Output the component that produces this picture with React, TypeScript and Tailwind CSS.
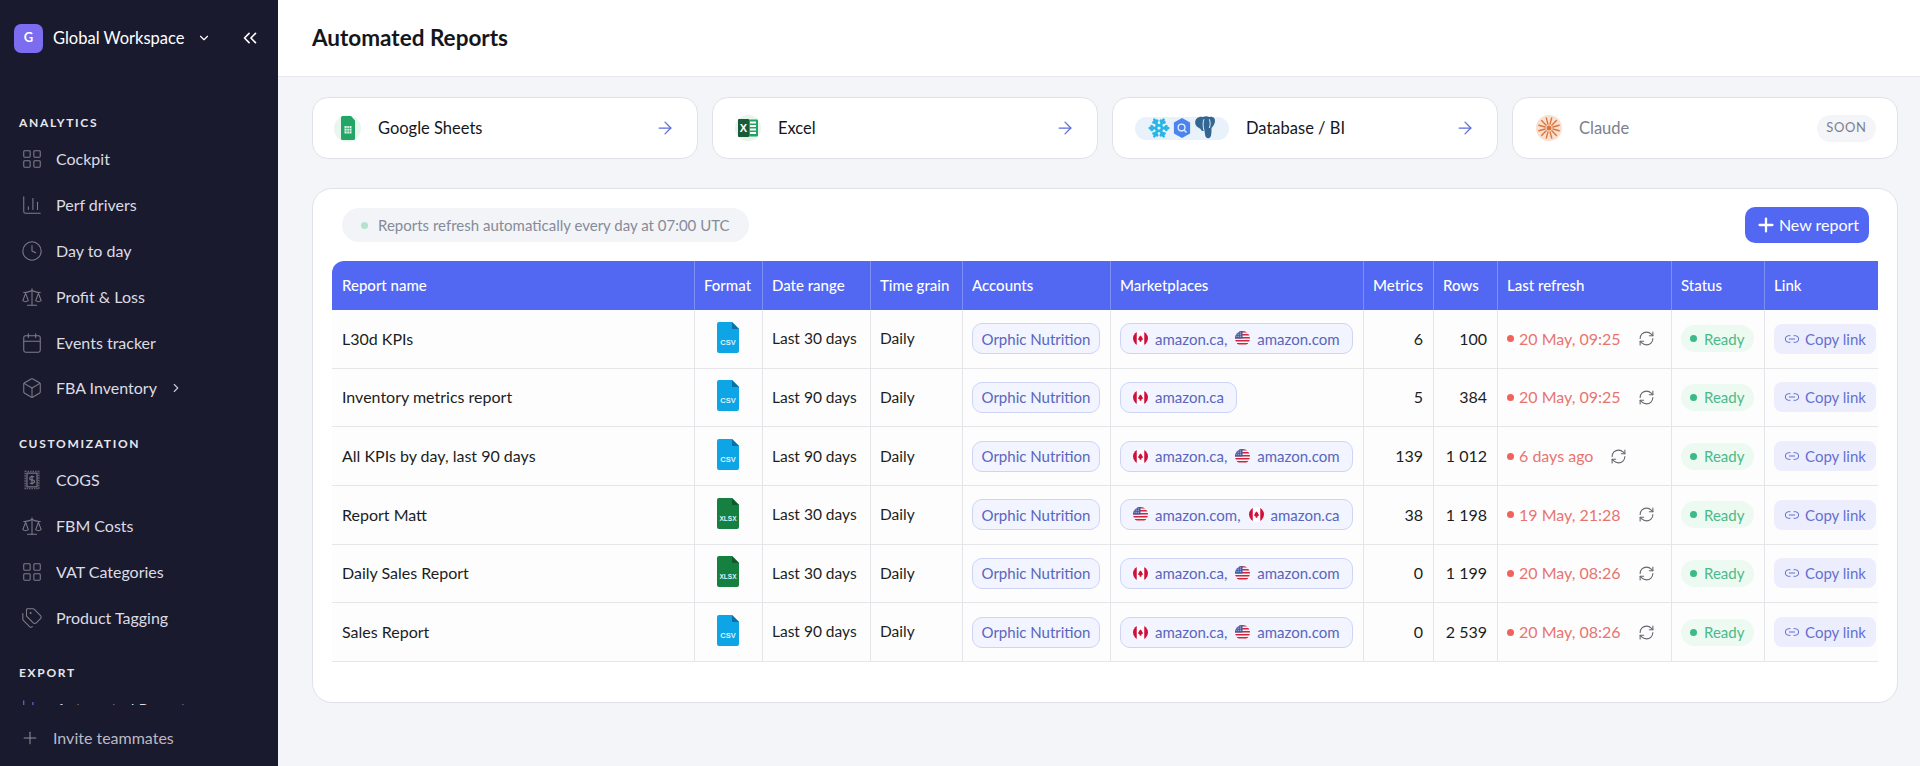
import {
  ArrowRight,
  Box,
  Calendar,
  ChartColumn,
  ChevronDown,
  ChevronRight,
  ChevronsLeft,
  Clock,
  LayoutGrid,
  Link2,
  Plus,
  RefreshCw,
  Scale,
  Snowflake,
  Tags,
} from "lucide-react";

const font = { fontFamily: "Lato, 'Liberation Sans', sans-serif" };

const StampIcon = ({ className }: { className?: string }) => (
  <svg viewBox="0 0 24 24" fill="none" stroke="currentColor" strokeWidth="1.25" className={className}>
    <rect x="4.5" y="2.5" width="15" height="19" strokeDasharray="1.6 1.1" />
    <rect x="6.5" y="4.5" width="11" height="15" />
    <path d="M14.5 8.5h-3.2a1.7 1.7 0 0 0 0 3.5h1.6a1.7 1.7 0 0 1 0 3.5H9.5M12 7v10" />
  </svg>
);

const sections = [
  {
    title: "ANALYTICS",
    gap: "mb-[27px]",
    items: [
      { label: "Cockpit", icon: LayoutGrid },
      { label: "Perf drivers", icon: ChartColumn },
      { label: "Day to day", icon: Clock },
      { label: "Profit & Loss", icon: Scale },
      { label: "Events tracker", icon: Calendar },
      { label: "FBA Inventory", icon: Box, more: true },
    ],
  },
  {
    title: "CUSTOMIZATION",
    gap: "mb-[24px]",
    items: [
      { label: "COGS", icon: StampIcon },
      { label: "FBM Costs", icon: Scale },
      { label: "VAT Categories", icon: LayoutGrid },
      { label: "Product Tagging", icon: Tags },
    ],
  },
];

const reports = [
  { name: "L30d KPIs", format: "CSV", range: "Last 30 days", markets: ["ca", "com"], metrics: "6", rows: "100", refresh: "20 May, 09:25" },
  { name: "Inventory metrics report", format: "CSV", range: "Last 90 days", markets: ["ca"], metrics: "5", rows: "384", refresh: "20 May, 09:25" },
  { name: "All KPIs by day, last 90 days", format: "CSV", range: "Last 90 days", markets: ["ca", "com"], metrics: "139", rows: "1 012", refresh: "6 days ago" },
  { name: "Report Matt", format: "XLSX", range: "Last 30 days", markets: ["com", "ca"], metrics: "38", rows: "1 198", refresh: "19 May, 21:28" },
  { name: "Daily Sales Report", format: "XLSX", range: "Last 30 days", markets: ["ca", "com"], metrics: "0", rows: "1 199", refresh: "20 May, 08:26" },
  { name: "Sales Report", format: "CSV", range: "Last 90 days", markets: ["ca", "com"], metrics: "0", rows: "2 539", refresh: "20 May, 08:26" },
];

const columns = [
  { label: "Report name", width: "w-[363px]" },
  { label: "Format", width: "w-[68px]" },
  { label: "Date range", width: "w-[108px]" },
  { label: "Time grain", width: "w-[92px]" },
  { label: "Accounts", width: "w-[148px]" },
  { label: "Marketplaces", width: "w-[253px]" },
  { label: "Metrics", width: "w-[70px]" },
  { label: "Rows", width: "w-[64px]" },
  { label: "Last refresh", width: "w-[174px]" },
  { label: "Status", width: "w-[93px]" },
  { label: "Link", width: "w-[113px]" },
];

const FlagCa = () => (
  <svg viewBox="0 0 16 16" className="w-[15px] h-[15px] shrink-0">
    <clipPath id="ca-clip">
      <circle cx="8" cy="8" r="8" />
    </clipPath>
    <g clipPath="url(#ca-clip)">
      <rect width="16" height="16" fill="#fff" />
      <rect width="4" height="16" fill="#d0103a" />
      <rect x="12" width="4" height="16" fill="#d0103a" />
      <path d="M8 4.5l.9 1.6.9-.4-.3 2 1-.4-.3 1.2.6.4-2 1.5.1 1H7.100l.1-1-2-1.500.6-.4-.3-1.200 1 .4-.3-2 .9.4z" fill="#d0103a" />
    </g>
  </svg>
);

const FlagUs = () => (
  <svg viewBox="0 0 16 16" className="w-[15px] h-[15px] shrink-0">
    <clipPath id="us-clip">
      <circle cx="8" cy="8" r="8" />
    </clipPath>
    <g clipPath="url(#us-clip)">
      <rect width="16" height="16" fill="#f4f4f6" />
      {[0, 3.2, 6.4, 9.6, 12.8].map((y) => (
        <rect key={y} y={y} width="16" height="1.600" fill="#d0253f" />
      ))}
      <rect width="8" height="8" fill="#3b5aa8" />
      <path d="M1.500 2h5M1.500 4h5M1.500 6h5" stroke="#fff" strokeWidth="0.7" strokeDasharray="1 1" />
    </g>
  </svg>
);

const Market = ({ code, comma }: { code: string; comma: boolean }) => (
  <span className="flex items-center gap-[7px]">
    {code === "ca" ? <FlagCa /> : <FlagUs />}
    <span>
      {code === "ca" ? "amazon.ca" : "amazon.com"}
      {comma && ","}
    </span>
  </span>
);

const FileIcon = ({ format }: { format: string }) => {
  const csv = format === "CSV";
  return (
    <svg viewBox="0 0 22 31" className="w-[22px] h-[31px] mx-auto mb-[3px] block">
      <path d="M2 0h13l7 7v22a2 2 0 0 1-2 2H2a2 2 0 0 1-2-2V2a2 2 0 0 1 2-2z" fill={csv ? "#0ea5e6" : "#15803f"} />
      <path d="M15 0l7 7h-7z" fill={csv ? "#0b6fa8" : "#0e5a2c"} />
      <text x="11" y="22.500" textAnchor="middle" fontSize={csv ? 7.5 : 6.5} fontWeight="700" fill="#dff3fb" fontFamily="'Liberation Sans', sans-serif">
        {format}
      </text>
    </svg>
  );
};

const SheetsIcon = () => (
  <div className="w-[27px] h-[27px] rounded-full bg-[#e9f6ee] flex items-center justify-center">
    <svg viewBox="0 0 14 24" className="w-[14px] h-[24px]">
      <path d="M1.500 0H10l4 4.500v18a1.500 1.500 0 0 1-1.500 1.500h-11A1.500 1.500 0 0 1 0 22.500v-21A1.500 1.500 0 0 1 1.500 0z" fill="#22a565" />
      <path d="M3.500 10h7v7.500h-7z" fill="#dff3e7" />
      <path d="M3.500 12.500h7M3.500 15h7M6 10v7.500M8.300 10v7.500" stroke="#22a565" strokeWidth="0.6" />
    </svg>
  </div>
);

const ExcelIcon = () => (
  <div className="w-[26px] h-[26px] rounded-full bg-[#e9f4ec] flex items-center justify-center">
    <svg viewBox="0 0 20 18" className="w-[20px] h-[18px]">
      <rect x="5" y="0.500" width="15" height="17" rx="1" fill="#21a366" />
      <rect width="11" height="18" rx="1" fill="#185c37" />
      <path d="M12 3.500h6M12 7h6M12 10.500h6M12 14h6" stroke="#fff" strokeWidth="1.800" />
      <text x="5.500" y="13" textAnchor="middle" fontSize="11" fontWeight="700" fill="#fff" fontFamily="'Liberation Sans', sans-serif">
        X
      </text>
    </svg>
  </div>
);

const BigQueryIcon = () => (
  <svg viewBox="0 0 20 22" className="w-[18px] h-[20px]">
    <path d="M10 0l9 5v12l-9 5-9-5V5z" fill="#4a84ec" />
    <circle cx="9.500" cy="10.500" r="3.800" fill="none" stroke="#e3edff" strokeWidth="1.500" />
    <path d="M12.500 13.500l2.500 2.500" stroke="#e3edff" strokeWidth="1.500" />
  </svg>
);

const PostgresIcon = () => (
  <svg viewBox="0 0 20 22" className="w-[22px] h-[24px]">
    <path d="M1 6c0-4 4-6 7-5 2-1 4-1 6 0 3-1 6 1 5 5-.5 2-2 4-3 5 0 2 0 5-.5 7-.5 2-3 3-4 2-1.500-1-1.500-4-2-7-1 1-3 1-3.500-1C3 10 1 9 1 6z" fill="#336791" />
    <path d="M9 3c-1 3-1 6 0 10M14 3c1 3 1 5 0 8" stroke="#e8f0fb" strokeWidth="0.900" fill="none" />
  </svg>
);

const ClaudeIcon = () => (
  <div className="w-[26px] h-[26px] rounded-full bg-[#fbdfcf] flex items-center justify-center">
    <svg viewBox="0 0 24 24" className="w-[24px] h-[24px]">
      {Array.from({ length: 12 }).map((_, i) => {
        const a = (i * Math.PI) / 6 + 0.26;
        return (
          <line
            key={i}
            x1={12 + 4 * Math.cos(a)}
            y1={12 + 4 * Math.sin(a)}
            x2={12 + 10.5 * Math.cos(a)}
            y2={12 + 10.5 * Math.sin(a)}
            stroke="#d9773f"
            strokeWidth="1.400"
            strokeLinecap="round"
          />
        );
      })}
      <circle cx="12" cy="12" r="2.500" fill="#d9773f" />
    </svg>
  </div>
);

const Sidebar = () => (
  <aside className="w-[278px] shrink-0 h-full bg-[#1a1a2e] flex flex-col">
    <div className="h-[76px] shrink-0 flex items-center pl-[14px] pr-[17px]">
      <div className="w-[29px] h-[29px] rounded-[7px] bg-[#7b6cf0] flex items-center justify-center text-white text-[13px] font-bold">G</div>
      <span className="ml-[10px] text-white text-[16.500px] font-normal">Global Workspace</span>
      <ChevronDown className="ml-[12px] w-[14px] h-[14px] text-white" />
      <ChevronsLeft strokeWidth={1.75} className="ml-auto w-[22px] h-[22px] text-white" />
    </div>
    <nav className="flex-1 min-h-0 overflow-hidden pt-[39px]">
      {sections.map((section) => (
        <div key={section.title} className={section.gap}>
          <div className="pl-[19px] h-[16px] leading-[16px] text-[12px] font-bold tracking-[0.14em] text-[#e8e8ef] mb-[5px]">{section.title}</div>
          {section.items.map((item) => (
            <div key={item.label} className={`${item.more ? "h-[43px]" : "h-[46px]"} flex items-center pl-[21px] text-[16px] text-[#dcdce4]`}>
              <item.icon strokeWidth={1.15} className="w-[22px] h-[22px] text-[#7d7d8a]" />
              <span className="ml-[13px]">{item.label}</span>
              {item.more && <ChevronRight className="ml-[12px] w-[14px] h-[14px] text-[#c5c5d0]" />}
            </div>
          ))}
        </div>
      ))}
      <div>
        <div className="pl-[19px] h-[16px] leading-[16px] text-[12px] font-bold tracking-[0.14em] text-[#e8e8ef] mb-[5px]">EXPORT</div>
        <div className="h-[46px] flex items-center pl-[21px] text-[16px] text-[#dcdce4]">
          <ChartColumn strokeWidth={1.15} className="w-[22px] h-[22px] text-[#7b6cf0]" />
          <span className="ml-[13px]">Automated Reports</span>
        </div>
      </div>
    </nav>
    <div className="h-[61px] pt-[5px] shrink-0 flex items-center pl-[20px] text-[16px] text-[#b9b9c4]">
      <Plus strokeWidth={1.25} className="w-[20px] h-[20px] text-[#8d8d98]" />
      <span className="ml-[13px]">Invite teammates</span>
    </div>
  </aside>
);

const cardClass = "h-[62px] rounded-[16px] border border-[#dfe2e8] bg-white flex items-center";
const arrowClass = "ml-auto w-[20px] h-[20px] text-[#5b6bdc]";

const Cards = () => (
  <div className="grid grid-cols-4 gap-[14px]">
    <div className={`${cardClass} pl-[21px] pr-[22px]`}>
      <SheetsIcon />
      <span className="ml-[17px] text-[16.500px] text-[#16171c]">Google Sheets</span>
      <ArrowRight strokeWidth={1.5} className={arrowClass} />
    </div>
    <div className={`${cardClass} pl-[22px] pr-[22px]`}>
      <ExcelIcon />
      <span className="ml-[17px] text-[16.500px] text-[#16171c]">Excel</span>
      <ArrowRight strokeWidth={1.5} className={arrowClass} />
    </div>
    <div className={`${cardClass} pl-[22px] pr-[22px]`}>
      <div className="w-[94px] h-[23px] rounded-full bg-[#e9f1fb] flex items-center justify-center gap-[3px]">
        <Snowflake strokeWidth={3} className="w-[22px] h-[22px] text-[#29b5e8]" />
        <BigQueryIcon />
        <PostgresIcon />
      </div>
      <span className="ml-[17px] text-[16.500px] text-[#16171c]">Database / BI</span>
      <ArrowRight strokeWidth={1.5} className={arrowClass} />
    </div>
    <div className={`${cardClass} pl-[23px] pr-[21px]`}>
      <ClaudeIcon />
      <span className="ml-[17px] text-[16.500px] text-[#7d8090]">Claude</span>
      <span className="ml-auto w-[59px] h-[27px] rounded-full bg-[#f3f5f9] flex items-center justify-center text-[13px] tracking-[0.05em] text-[#7d8090]">SOON</span>
    </div>
  </div>
);

const ReportRow = ({ report }: { report: (typeof reports)[number] }) => {
  const cell = "border-b border-r border-[#e4e6ea] pl-[9px] pr-[10px]";
  return (
    <tr className="h-[58.670px] bg-[#fdfdfe] text-[15.500px] text-[#1c1d22]">
      <td className={`${cell} !pl-[10px] text-[16px]`}>{report.name}</td>
      <td className={cell}>
        <FileIcon format={report.format} />
      </td>
      <td className={cell}>{report.range}</td>
      <td className={cell}>Daily</td>
      <td className={cell}>
        <span className="inline-flex items-center justify-center w-[128px] h-[31px] rounded-[10px] border border-[#cdd4f6] bg-[#f2f4ff] text-[15px] text-[#5966bd]">Orphic Nutrition</span>
      </td>
      <td className={cell}>
        <span className="inline-flex items-center gap-[8px] h-[31px] px-[12px] rounded-[10px] border border-[#cdd4f6] bg-[#f2f4ff] text-[15px] text-[#5966bd]">
          {report.markets.map((code, i) => (
            <Market key={code} code={code} comma={i < report.markets.length - 1} />
          ))}
        </span>
      </td>
      <td className={`${cell} text-right text-[16px] tabular-nums`}>{report.metrics}</td>
      <td className={`${cell} text-right text-[16px] tabular-nums`}>{report.rows}</td>
      <td className={cell}>
        <div className="flex items-center text-[16px] text-[#e8746f]">
          <span className="w-[7px] h-[7px] rounded-full bg-[#f0625c] shrink-0" />
          <span className="ml-[5px] whitespace-nowrap">{report.refresh}</span>
          <RefreshCw strokeWidth={1.5} className="ml-[17px] w-[17px] h-[17px] text-[#65666e]" />
        </div>
      </td>
      <td className={cell}>
        <span className="inline-flex items-center gap-[7px] w-[73px] h-[27px] pl-[9px] rounded-full bg-[#ecfaf1] text-[15px] text-[#4cb98a]">
          <span className="w-[7px] h-[7px] rounded-full bg-[#3cb987]" />
          Ready
        </span>
      </td>
      <td className="border-b border-[#e4e6ea] pl-[9px]">
        <span className="inline-flex items-center justify-center gap-[5px] w-[102px] h-[30px] rounded-[8px] bg-[#eceefe] text-[15px] text-[#6470d0]">
          <Link2 strokeWidth={1.5} className="w-[16px] h-[16px]" />
          Copy link
        </span>
      </td>
    </tr>
  );
};

const ReportsPanel = () => (
  <div className="mt-[29px] h-[515px] rounded-[20px] border border-[#dfe2e8] bg-white pl-[19px] pr-[19px]">
    <div className="h-[72px] flex items-center justify-between pl-[10px] pr-[9px]">
      <div className="h-[34px] w-[407px] rounded-full bg-[#f2f4f7] flex items-center pl-[19px] text-[15px] text-[#868b99]">
        <span className="w-[7px] h-[7px] rounded-full bg-[#b5e2cf]" />
        <span className="ml-[10px]">Reports refresh automatically every day at 07:00 UTC</span>
      </div>
      <button className="w-[124px] h-[36px] rounded-[10px] bg-[#5268f2] text-white text-[16px] flex items-center justify-center gap-[2px]">
        <Plus strokeWidth={2.5} className="w-[22px] h-[22px]" />
        New report
      </button>
    </div>
    <table className="table-fixed w-[1546px] border-separate border-spacing-0">
      <colgroup>
        {columns.map((col) => (
          <col key={col.label} className={col.width} />
        ))}
      </colgroup>
      <thead>
        <tr className="h-[49px] bg-[#5268f2] text-white text-[15px]">
          {columns.map((col, i) => (
            <th
              key={col.label}
              className={`${i === 0 ? "pl-[10px] rounded-tl-[12px]" : "pl-[9px]"} text-left font-medium whitespace-nowrap border-[#7d8ef6] ${i < columns.length - 1 ? "border-r" : ""}`}
            >
              {col.label}
            </th>
          ))}
        </tr>
      </thead>
      <tbody>
        {reports.map((report) => (
          <ReportRow key={report.name} report={report} />
        ))}
      </tbody>
    </table>
  </div>
);

export default function App() {
  return (
    <div style={font} className="flex h-screen w-screen overflow-hidden bg-[#f3f5f9]">
      <Sidebar />
      <main className="flex-1 min-w-0">
        <header className="h-[77px] bg-white border-b border-[#e6e8ed] flex items-center pl-[34px]">
          <h1 className="text-[22.500px] font-bold text-[#15161b]">Automated Reports</h1>
        </header>
        <div className="pt-[20px] pl-[34px] pr-[22px]">
          <Cards />
          <ReportsPanel />
        </div>
      </main>
    </div>
  );
}
